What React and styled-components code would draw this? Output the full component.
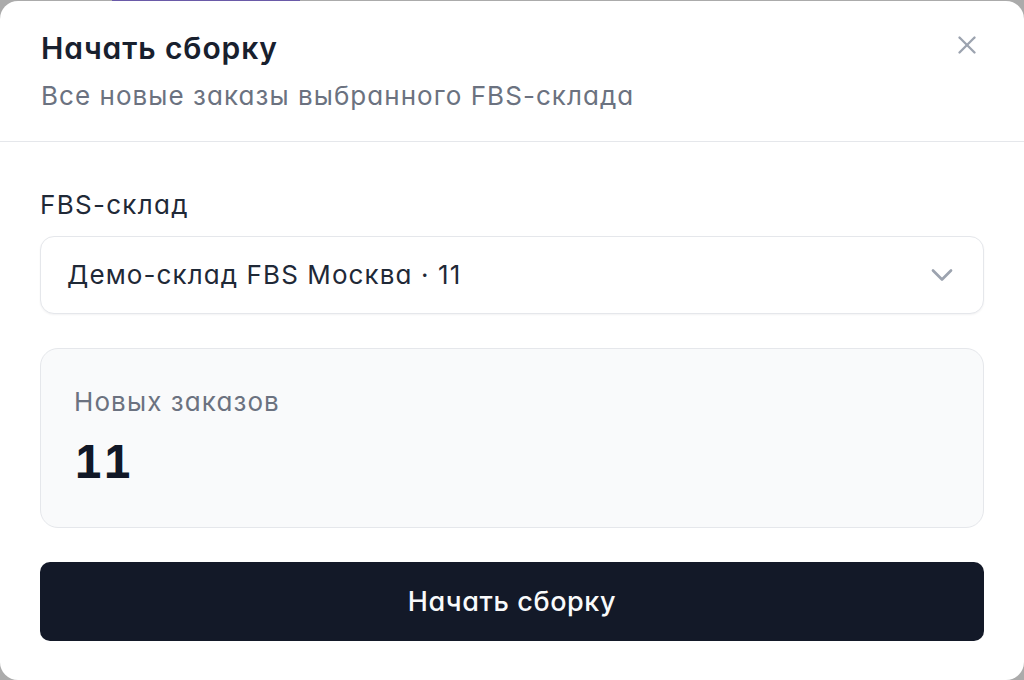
import React from "react";
import styled, { createGlobalStyle } from "styled-components";
import { X, ChevronDown } from "lucide-react";

const Global = createGlobalStyle`
  html, body { margin: 0; padding: 0; }
  body {
    background: #ababab;
    font-family: Inter, "Noto Sans", sans-serif;
    font-feature-settings: "cv11";
    -webkit-font-smoothing: antialiased;
  }
  * { box-sizing: border-box; }
`;

const Page = styled.div`
  width: 1024px;
  height: 680px;
  display: flex;
  flex-direction: column;
  overflow: hidden;
`;

const TopStrip = styled.div`
  height: 1px;
  display: flex;
  flex-shrink: 0;
`;

const TabIndicator = styled.div`
  margin-left: 112px;
  width: 188px;
  background: #6a5aa8;
`;

const Modal = styled.div`
  flex: 1;
  background: #ffffff;
  border-radius: 18px;
  display: flex;
  flex-direction: column;
`;

const Header = styled.div`
  position: relative;
  padding: 27px 41px 27px;
  border-bottom: 1px solid #e5e7eb;
  display: flex;
  flex-direction: column;
  gap: 10px;
`;

const Title = styled.h2`
  margin: 0;
  font-size: 30px;
  line-height: 40px;
  font-weight: 600;
  color: #18202e;
  letter-spacing: 0.9px;
`;

const Subtitle = styled.p`
  margin: 0;
  font-size: 26px;
  line-height: 36px;
  font-weight: 400;
  color: #6b7280;
  letter-spacing: 1.05px;
`;

const CloseButton = styled.button`
  position: absolute;
  top: 29px;
  right: 42px;
  width: 30px;
  height: 30px;
  padding: 0;
  border: none;
  background: transparent;
  color: #9ca3af;
  display: flex;
  align-items: center;
  justify-content: center;
  cursor: pointer;
`;

const Body = styled.div`
  padding: 45px 40px 0 40px;
  display: flex;
  flex-direction: column;
`;

const Label = styled.label`
  font-size: 26px;
  line-height: 36px;
  color: #1f2937;
  letter-spacing: 1.3px;
  margin-bottom: 13px;
`;

const Select = styled.div`
  height: 78px;
  border: 1px solid #e5e7eb;
  border-radius: 14px;
  background: #ffffff;
  box-shadow: 0 1px 2px rgba(16, 24, 40, 0.05);
  display: flex;
  align-items: center;
  justify-content: space-between;
  padding: 0 23px 0 26px;
`;

const SelectValue = styled.span`
  font-size: 26px;
  line-height: 36px;
  color: #1f2937;
  letter-spacing: 1.1px;
`;

const Chevron = styled.span`
  color: #9ca3af;
  display: flex;
`;

const StatCard = styled.div`
  margin-top: 34px;
  height: 180px;
  background: #f9fafb;
  border: 1px solid #e5e7eb;
  border-radius: 18px;
  padding: 35px 33px 0;
  display: flex;
  flex-direction: column;
  gap: 17px;
`;

const StatLabel = styled.div`
  font-size: 26px;
  line-height: 36px;
  color: #6b7280;
  letter-spacing: 1.1px;
`;

const StatValue = styled.div`
  font-size: 45px;
  line-height: 50px;
  font-weight: 700;
  color: #111827;
  font-variant-numeric: tabular-nums;
  letter-spacing: 0;
`;

const PrimaryButton = styled.button`
  margin-top: 34px;
  height: 79px;
  border: none;
  border-radius: 10px;
  background: #131928;
  color: #f9fafb;
  font-family: inherit;
  font-feature-settings: "cv11";
  font-size: 27px;
  font-weight: 500;
  letter-spacing: 0.6px;
  cursor: pointer;
`;

export default function App() {
  return (
    <>
      <Global />
      <Page>
        <TopStrip>
          <TabIndicator />
        </TopStrip>
        <Modal>
          <Header>
            <Title>Начать сборку</Title>
            <Subtitle>Все новые заказы выбранного FBS-склада</Subtitle>
            <CloseButton aria-label="Закрыть">
              <X size={30} strokeWidth={1.9} />
            </CloseButton>
          </Header>
          <Body>
            <Label>FBS-склад</Label>
            <Select>
              <SelectValue>Демо-склад FBS Москва · 11</SelectValue>
              <Chevron>
                <ChevronDown size={36} strokeWidth={1.8} />
              </Chevron>
            </Select>
            <StatCard>
              <StatLabel>Новых заказов</StatLabel>
              <StatValue>11</StatValue>
            </StatCard>
            <PrimaryButton>Начать сборку</PrimaryButton>
          </Body>
        </Modal>
      </Page>
    </>
  );
}
